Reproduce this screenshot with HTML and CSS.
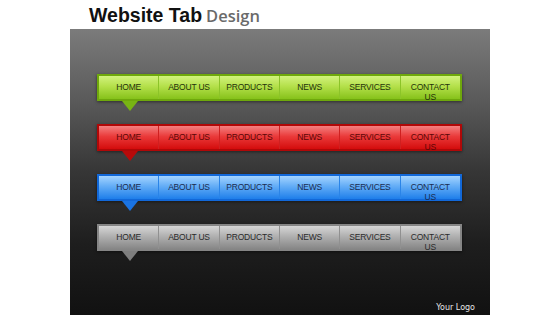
FILE: index.html
```html
<!DOCTYPE html>
<html>
<head>
<meta charset="utf-8">
<link rel="stylesheet" href="styles.css">
</head>
<body>
<div class="title"><span class="t-main">Website Tab</span> <span class="t-sub">Design</span></div>
<div class="panel">
  <div class="bars">
    <div class="bar green">
      <div class="tab">HOME</div><div class="tab">ABOUT US</div><div class="tab">PRODUCTS</div><div class="tab">NEWS</div><div class="tab">SERVICES</div><div class="tab">CONTACT US</div>
      <div class="pointer"></div>
    </div>
    <div class="bar red">
      <div class="tab">HOME</div><div class="tab">ABOUT US</div><div class="tab">PRODUCTS</div><div class="tab">NEWS</div><div class="tab">SERVICES</div><div class="tab">CONTACT US</div>
      <div class="pointer"></div>
    </div>
    <div class="bar blue">
      <div class="tab">HOME</div><div class="tab">ABOUT US</div><div class="tab">PRODUCTS</div><div class="tab">NEWS</div><div class="tab">SERVICES</div><div class="tab">CONTACT US</div>
      <div class="pointer"></div>
    </div>
    <div class="bar gray">
      <div class="tab">HOME</div><div class="tab">ABOUT US</div><div class="tab">PRODUCTS</div><div class="tab">NEWS</div><div class="tab">SERVICES</div><div class="tab">CONTACT US</div>
      <div class="pointer"></div>
    </div>
  </div>
  <div class="logo">Your Logo</div>
</div>
</body>
</html>
```
FILE: styles.css
```css
html, body {
  margin: 0;
  padding: 0;
  background: #ffffff;
  width: 560px;
  height: 315px;
  overflow: hidden;
}
.title {
  height: 29px;
  padding-left: 89px;
  box-sizing: border-box;
  padding-top: 3px;
  line-height: 24px;
  white-space: nowrap;
}
.t-main {
  font-family: "Liberation Sans", Arial, sans-serif;
  font-weight: bold;
  font-size: 19.5px;
  color: #111;
}
.t-sub {
  font-family: "Open Sans", sans-serif;
  font-weight: 600;
  font-size: 16.5px;
  color: #6a6a6a;
}
.panel {
  margin-left: 70px;
  width: 420px;
  height: 286px;
  background: linear-gradient(to bottom, #7b7b7b 0%, #5a5a5a 25%, #363636 50%, #1e1e1e 75%, #111111 100%);
  position: relative;
  box-sizing: border-box;
  padding-top: 45px;
  padding-left: 27px;
  display: flex;
  flex-direction: column;
}
.bars {
  display: flex;
  flex-direction: column;
  gap: 23px;
}
.bar {
  position: relative;
  width: 365px;
  height: 27px;
  box-sizing: border-box;
  border: 2px solid;
  display: flex;
  gap: 1px;
  box-shadow: 0 1px 3px rgba(0,0,0,0.5);
}
.tab {
  flex: 1;
  text-align: center;
  font-family: "Liberation Sans", Arial, sans-serif;
  font-size: 8.5px;
  letter-spacing: -0.2px;
  line-height: 10px;
  padding: 6px 6px 0;
  box-sizing: border-box;
}
.pointer {
  position: absolute;
  left: 23px;
  top: 25px;
  width: 0;
  height: 0;
  border-left: 8px solid transparent;
  border-right: 8px solid transparent;
  border-top: 10px solid;
}
.green { border-color: #6fa80c; background: #8cc428; }
.green .tab { background: linear-gradient(to bottom, #d2f27e 0%, #b4e04a 45%, #86c21a 100%); color: #24320a; }
.green .pointer { border-top-color: #78b414; }
.red { border-color: #b00808; background: #d02020; }
.red .tab { background: linear-gradient(to bottom, #f48080 0%, #ea3a3a 45%, #d40c0c 100%); color: #5a0606; }
.red .pointer { border-top-color: #b80a0a; }
.blue { border-color: #1268d8; background: #2a84e8; }
.blue .tab { background: linear-gradient(to bottom, #a4d4ff 0%, #62acf6 45%, #1e7eea 100%); color: #1a2c50; }
.blue .pointer { border-top-color: #1a74e4; }
.gray { border-color: #858585; background: #909090; }
.gray .tab { background: linear-gradient(to bottom, #d6d6d6 0%, #b0b0b0 45%, #868686 100%); color: #2a2a2a; }
.gray .pointer { border-top-color: #7e7e7e; }
.logo {
  position: absolute;
  right: 15px;
  bottom: 3px;
  font-family: "DejaVu Sans", sans-serif;
  font-size: 8px;
  color: #e6e6e6;
}
```
